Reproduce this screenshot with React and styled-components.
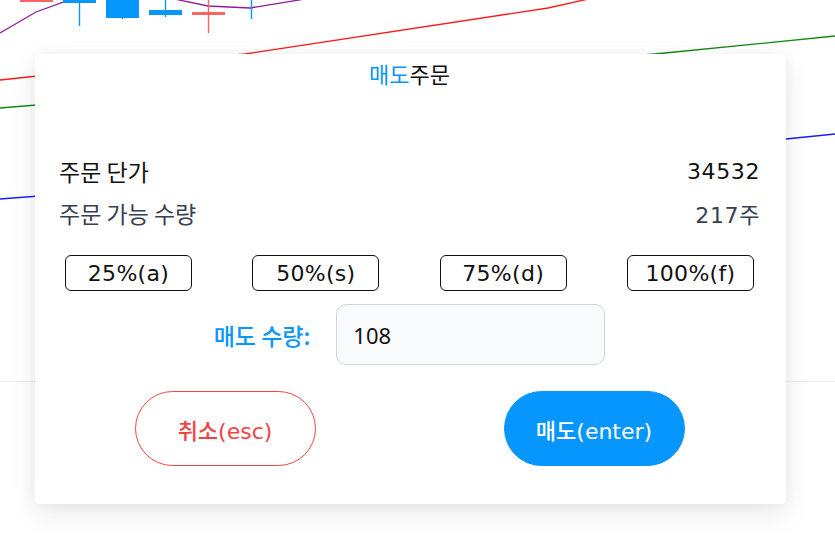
import React from "react";
import styled, { createGlobalStyle } from "styled-components";

const GlobalStyle = createGlobalStyle`
  body {
    margin: 0;
    background: #fff;
    font-family: "DejaVu Sans", "Noto Sans CJK KR", sans-serif;
  }
  * {
    box-sizing: border-box;
  }
`;

const BLUE = "#0796fd";
const RED = "#ef4444";

const Page = styled.div`
  position: relative;
  width: 100%;
  height: 559px;
  overflow: hidden;
`;

const ChartArea = styled.div`
  height: 382px;
  border-bottom: 1px solid #ececec;
  svg {
    display: block;
  }
`;

const Modal = styled.div`
  position: absolute;
  left: 35px;
  top: 54px;
  width: 751px;
  height: 450px;
  background: #fff;
  border-radius: 4px;
  box-shadow: 0 10px 28px rgba(0, 0, 0, 0.09), 0 0 14px rgba(0, 0, 0, 0.04);
  padding: 4px 26px 0 24px;
  display: flex;
  flex-direction: column;
`;

const Title = styled.h2`
  margin: 0;
  font-family: "Noto Sans CJK KR", sans-serif;
  font-size: 22px;
  font-weight: 400;
  line-height: 30px;
  text-align: center;
  color: #111;
`;

const Accent = styled.span`
  color: ${BLUE};
`;

const InfoList = styled.div`
  margin-top: 67px;
  display: flex;
  flex-direction: column;
  gap: 10px;
`;

const InfoRow = styled.div`
  display: flex;
  justify-content: space-between;
  align-items: center;
  height: 32px;
  font-size: 22px;
  letter-spacing: 0.6px;
  color: ${({ $muted }) => ($muted ? "#374151" : "#111")};
`;

const Label = styled.span`
  font-family: "Noto Sans CJK KR", sans-serif;
  font-size: 23px;
  letter-spacing: 0;
`;

const PercentRow = styled.div`
  margin-top: 26px;
  padding: 0 6px;
  display: flex;
  justify-content: space-between;
`;

const PercentButton = styled.button`
  width: 127px;
  height: 36px;
  background: #fff;
  border: 1px solid #111;
  border-radius: 6px;
  font-family: inherit;
  font-size: 22px;
  letter-spacing: 0.3px;
  color: #111;
  padding: 0;
  cursor: pointer;
`;

const QtyRow = styled.div`
  margin-top: 13px;
  display: flex;
  justify-content: center;
  align-items: center;
  gap: 26px;
`;

const QtyLabel = styled.label`
  font-family: "Noto Sans CJK KR", sans-serif;
  font-size: 23px;
  font-weight: 500;
  color: ${BLUE};
`;

const QtyInput = styled.input`
  width: 269px;
  height: 61px;
  background: #f9fafb;
  border: 1px solid #d1d5db;
  border-radius: 10px;
  padding: 0 16px;
  font-family: "Noto Sans", sans-serif;
  font-size: 22px;
  color: #111;
  outline: none;
`;

const ActionRow = styled.div`
  margin-top: 26px;
  display: flex;
  justify-content: center;
  gap: 188px;
`;

const ActionButton = styled.button`
  width: 181px;
  height: 75px;
  border-radius: 38px;
  font-family: "DejaVu Sans", "Noto Sans CJK KR", sans-serif;
  font-size: 22px;
  font-weight: 500;
  cursor: pointer;
  padding: 0;
  border: 1px solid ${({ $primary }) => ($primary ? BLUE : RED)};
  background: ${({ $primary }) => ($primary ? BLUE : "#fff")};
  color: ${({ $primary }) => ($primary ? "#fff" : RED)};
`;

const candles = [
  { x: 20, y: -6, h: 8, wick: null, color: "#f86464" },
  { x: 63, y: -6, h: 9, wick: [0, 26], color: BLUE },
  { x: 106, y: -4, h: 22, wick: [0, 19], color: BLUE },
  { x: 149, y: 10, h: 5, wick: [0, 17], color: BLUE },
  { x: 192, y: 12, h: 3, wick: [0, 33], color: "#f86464" },
  { x: 235, y: -20, h: 10, wick: [0, 19], color: BLUE },
];

const Chart = () => (
  <svg width="835" height="381" viewBox="0 0 835 381">
    <polyline
      points="0,80 245,54 548,8 620,-8"
      fill="none"
      stroke="#ff1a1a"
      strokeWidth="1.3"
    />
    <polyline
      points="0,108 655,54 835,36"
      fill="none"
      stroke="#118a11"
      strokeWidth="1.3"
    />
    <polyline
      points="0,199 786,139 835,134"
      fill="none"
      stroke="#1a1aff"
      strokeWidth="1.3"
    />
    <polyline
      points="0,33 36,12 80,-4 160,-4 208,6 250,8 305,-1 340,-8"
      fill="none"
      stroke="#8e1c9c"
      strokeWidth="1.3"
    />
    {candles.map((c, i) => (
      <g key={i}>
        {c.wick && (
          <line
            x1={c.x + 16.5}
            x2={c.x + 16.5}
            y1={c.wick[0]}
            y2={c.wick[1]}
            stroke={c.color}
            strokeWidth="1.4"
          />
        )}
        <rect x={c.x} y={c.y} width="33" height={c.h} fill={c.color} />
      </g>
    ))}
  </svg>
);

const percents = ["25%(a)", "50%(s)", "75%(d)", "100%(f)"];

export default function App() {
  return (
    <Page>
      <GlobalStyle />
      <ChartArea>
        <Chart />
      </ChartArea>
      <Modal>
        <Title>
          <Accent>매도</Accent>주문
        </Title>
        <InfoList>
          <InfoRow>
            <Label>주문 단가</Label>
            <span>34532</span>
          </InfoRow>
          <InfoRow $muted>
            <Label>주문 가능 수량</Label>
            <span>217주</span>
          </InfoRow>
        </InfoList>
        <PercentRow>
          {percents.map((p) => (
            <PercentButton key={p}>{p}</PercentButton>
          ))}
        </PercentRow>
        <QtyRow>
          <QtyLabel htmlFor="qty">매도 수량:</QtyLabel>
          <QtyInput id="qty" defaultValue="108" />
        </QtyRow>
        <ActionRow>
          <ActionButton>취소(esc)</ActionButton>
          <ActionButton $primary>매도(enter)</ActionButton>
        </ActionRow>
      </Modal>
    </Page>
  );
}
